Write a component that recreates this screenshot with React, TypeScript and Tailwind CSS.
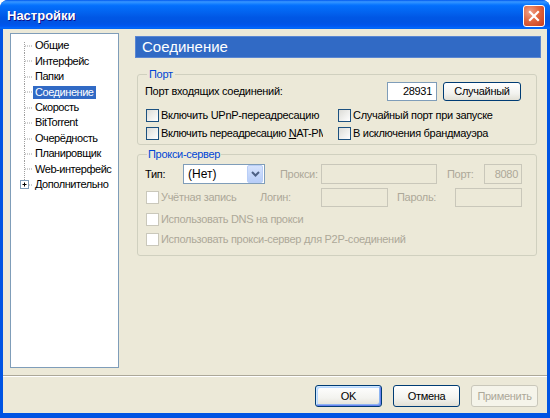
import React from "react";

const treeItems = [
  "Общие",
  "Интерфейс",
  "Папки",
  "Соединение",
  "Скорость",
  "BitTorrent",
  "Очерёдность",
  "Планировщик",
  "Web-интерфейс",
  "Дополнительно",
];

const Checkbox = ({ disabled = false }: { disabled?: boolean }) => (
  <span
    className={`inline-block w-[13px] h-[13px] shrink-0 border ${
      disabled
        ? "border-[#CAC8BB] bg-white"
        : "border-[#1C5180] bg-[linear-gradient(135deg,#DCDCD7_0%,#FFFFFF_100%)]"
    }`}
  />
);

const TreeConnector = ({ last, first, plus }: { last?: boolean; first?: boolean; plus?: boolean }) => (
  <svg width="22" height="15.5" className="shrink-0">
    <line
      x1="13.5"
      y1={first ? 4 : 0}
      x2="13.5"
      y2={last ? 7.75 : 15.5}
      stroke="#A0A0A0"
      strokeDasharray="1 1"
    />
    <line x1="14" y1="8" x2="22" y2="8" stroke="#A0A0A0" strokeDasharray="1 1" />
    {plus && (
      <g>
        <rect x="9.5" y="3.5" width="8" height="8" fill="white" stroke="#7F9DB9" />
        <line x1="11.5" y1="7.5" x2="15.5" y2="7.5" stroke="#000" />
        <line x1="13.5" y1="5.5" x2="13.5" y2="9.5" stroke="#000" />
      </g>
    )}
  </svg>
);

const XpButton = ({
  children,
  primary,
  disabled,
}: {
  children: React.ReactNode;
  primary?: boolean;
  disabled?: boolean;
}) => (
  <button
    className={`w-[67px] h-[22px] rounded-[3px] border flex items-center justify-center ${
      disabled
        ? "border-[#C9C7BA] bg-[#F5F4EA] text-[#ACA899]"
        : "border-[#003C74] bg-[linear-gradient(180deg,#FFFFFF_0%,#F3F3EF_60%,#E2E0D6_100%)] text-black"
    } ${
      primary
        ? "shadow-[inset_-1px_-1px_#6982EE,inset_1px_1px_#CEE7FF,inset_-2px_-2px_#8CB4F2,inset_2px_2px_#B7D7FF]"
        : ""
    }`}
  >
    {children}
  </button>
);

export default function App() {
  return (
    <div className="w-[550px] h-[418px] flex flex-col bg-[#0054E3] rounded-t-[8px] overflow-hidden font-['Liberation_Sans',Arial,sans-serif] text-[11px] tracking-[-0.3px] text-black">
      {/* Title bar */}
      <div className="h-[29px] shrink-0 flex items-center justify-between pl-[7px] pr-[5px] pt-[2px] bg-[linear-gradient(180deg,#0058EE_0%,#3593FF_6%,#288EFF_10%,#127DFF_14%,#036FFC_20%,#0262EE_44%,#0057E5_60%,#0054E3_76%,#0055EB_86%,#005BF5_92%,#026AFE_96%,#0062EF_100%)]">
        <span className="text-white font-bold text-[13px] tracking-normal [text-shadow:1px_1px_#0F1089]">Настройки</span>
        <div className="w-[22px] h-[22px] rounded-[3px] border border-white bg-[radial-gradient(circle_at_30%_30%,#F0A28A_0%,#E2673F_45%,#C73B1C_100%)] flex items-center justify-center">
          <svg width="12" height="12" viewBox="0 0 12 12">
            <path d="M2 2 L10 10 M10 2 L2 10" stroke="white" strokeWidth="2.2" strokeLinecap="square" />
          </svg>
        </div>
      </div>

      {/* Client area */}
      <div className="flex-1 mx-[3px] mb-[5px] bg-[#ECE9D8] flex flex-col">
        <div className="flex pl-[7px] pt-[4px] pr-[6px]">
          {/* Tree */}
          <div className="w-[109px] h-[335px] shrink-0 bg-white border border-[#7F9DB9] pt-[4px] overflow-hidden tracking-[-0.45px]">
            {treeItems.map((item, i) => (
              <div key={item} className="flex items-center h-[15.45px]">
                <TreeConnector first={i === 0} last={i === treeItems.length - 1} plus={i === treeItems.length - 1} />
                <span
                  className={`px-[2px] leading-[13px] whitespace-nowrap ${
                    item === "Соединение" ? "bg-[#316AC5] text-white" : ""
                  }`}
                >
                  {item}
                </span>
              </div>
            ))}
          </div>

          {/* Right side */}
          <div className="ml-[16px] flex-1 pt-[3px]">
            <div className="h-[22px] bg-[#316AC5] border border-[#5A86D2] flex items-center pl-[6px] text-white text-[15px] tracking-normal">
              Соединение
            </div>

            {/* Port group */}
            <fieldset className="mt-[10px] mx-[2px] w-[400px] border border-[#D0D0BF] rounded-[3px] pl-[7px] pr-[15px] pt-[1px] pb-[3px]">
              <legend className="text-[#0046D5] px-[2px] ml-[2px] leading-[13px]">Порт</legend>
              <div className="flex items-center h-[19px]">
                <span className="flex-1">Порт входящих соединений:</span>
                <div className="w-[50px] h-[19px] border border-[#7F9DB9] bg-white flex items-center justify-end pr-[4px]">
                  28931
                </div>
                <div className="ml-[6px]">
                  <button className="w-[78px] h-[19px] rounded-[3px] border border-[#003C74] bg-[linear-gradient(180deg,#FFFFFF_0%,#F3F3EF_60%,#E2E0D6_100%)] flex items-center justify-center">
                    Случайный
                  </button>
                </div>
              </div>
              <div className="grid grid-cols-[178px_1fr] gap-x-[15px] gap-y-[2px] mt-[6px]">
                <div className="flex items-center h-[16px] gap-[2px] pl-[1px] overflow-hidden whitespace-nowrap">
                  <Checkbox />
                  <span>Включить UPnP-переадресацию</span>
                </div>
                <div className="flex items-center h-[16px] gap-[2px] whitespace-nowrap">
                  <Checkbox />
                  <span>Случайный порт при запуске</span>
                </div>
                <div className="flex items-center h-[16px] gap-[2px] pl-[1px] overflow-hidden whitespace-nowrap tracking-[-0.4px]">
                  <Checkbox />
                  <span>
                    Включить переадресацию <span className="underline">N</span>AT-PMP
                  </span>
                </div>
                <div className="flex items-center h-[16px] gap-[2px] whitespace-nowrap">
                  <Checkbox />
                  <span>В исключения брандмауэра</span>
                </div>
              </div>
            </fieldset>

            {/* Proxy group */}
            <fieldset className="mt-[3px] mx-[2px] w-[400px] border border-[#D0D0BF] rounded-[3px] pl-[7px] pr-[14px] pt-[3px] pb-[8px]">
              <legend className="text-[#0046D5] px-[1px] ml-[2px] leading-[13px]">Прокси-сервер</legend>
              <div className="flex items-center h-[20px]">
                <span className="w-[38px] shrink-0">Тип:</span>
                <div className="w-[82px] h-[20px] border border-[#7F9DB9] bg-white flex items-center">
                  <span className="flex-1 pl-[4px] text-[12px] tracking-normal">(Нет)</span>
                  <div className="w-[16px] h-[18px] mr-[1px] rounded-[2px] border border-[#B9CEF7] bg-[linear-gradient(180deg,#D6E3FD_0%,#B7CDF8_100%)] flex items-center justify-center">
                    <svg width="9" height="6" viewBox="0 0 9 6">
                      <path d="M1 1 L4.5 4.5 L8 1" stroke="#4D6185" strokeWidth="2" fill="none" />
                    </svg>
                  </div>
                </div>
                <span className="ml-[15px] w-[41px] shrink-0 text-[#ACA899]">Прокси:</span>
                <div className="w-[116px] h-[20px] border border-[#C9C7BA]" />
                <span className="ml-[10px] w-[37px] shrink-0 text-[#ACA899]">Порт:</span>
                <div className="w-[38px] h-[20px] border border-[#C9C7BA] flex items-center justify-end pr-[3px] text-[#ACA899]">
                  8080
                </div>
              </div>
              <div className="flex items-center h-[19px] mt-[4px]">
                <div className="w-[115px] shrink-0 flex items-center gap-[2px] pl-[1px] text-[#ACA899]">
                  <Checkbox disabled />
                  <span>Учётная запись</span>
                </div>
                <span className="w-[61px] shrink-0 text-[#ACA899]">Логин:</span>
                <div className="w-[67px] h-[19px] border border-[#C9C7BA]" />
                <span className="ml-[9px] w-[58px] shrink-0 text-[#ACA899]">Пароль:</span>
                <div className="w-[67px] h-[19px] border border-[#C9C7BA]" />
              </div>
              <div className="flex items-center h-[16px] mt-[4px] gap-[2px] pl-[1px] text-[#ACA899]">
                <Checkbox disabled />
                <span>Использовать DNS на прокси</span>
              </div>
              <div className="flex items-center h-[16px] mt-[4px] gap-[2px] pl-[1px] text-[#ACA899]">
                <Checkbox disabled />
                <span>Использовать прокси-сервер для P2P-соединений</span>
              </div>
            </fieldset>
          </div>
        </div>

        {/* Separator */}
        <div className="mt-[7px] border-t border-[#ACA899] border-b border-b-white" />

        {/* Buttons */}
        <div className="flex justify-end gap-[11px] mt-[8px] pr-[9px]">
          <XpButton primary>OK</XpButton>
          <XpButton>Отмена</XpButton>
          <XpButton disabled>Применить</XpButton>
        </div>
      </div>
    </div>
  );
}
